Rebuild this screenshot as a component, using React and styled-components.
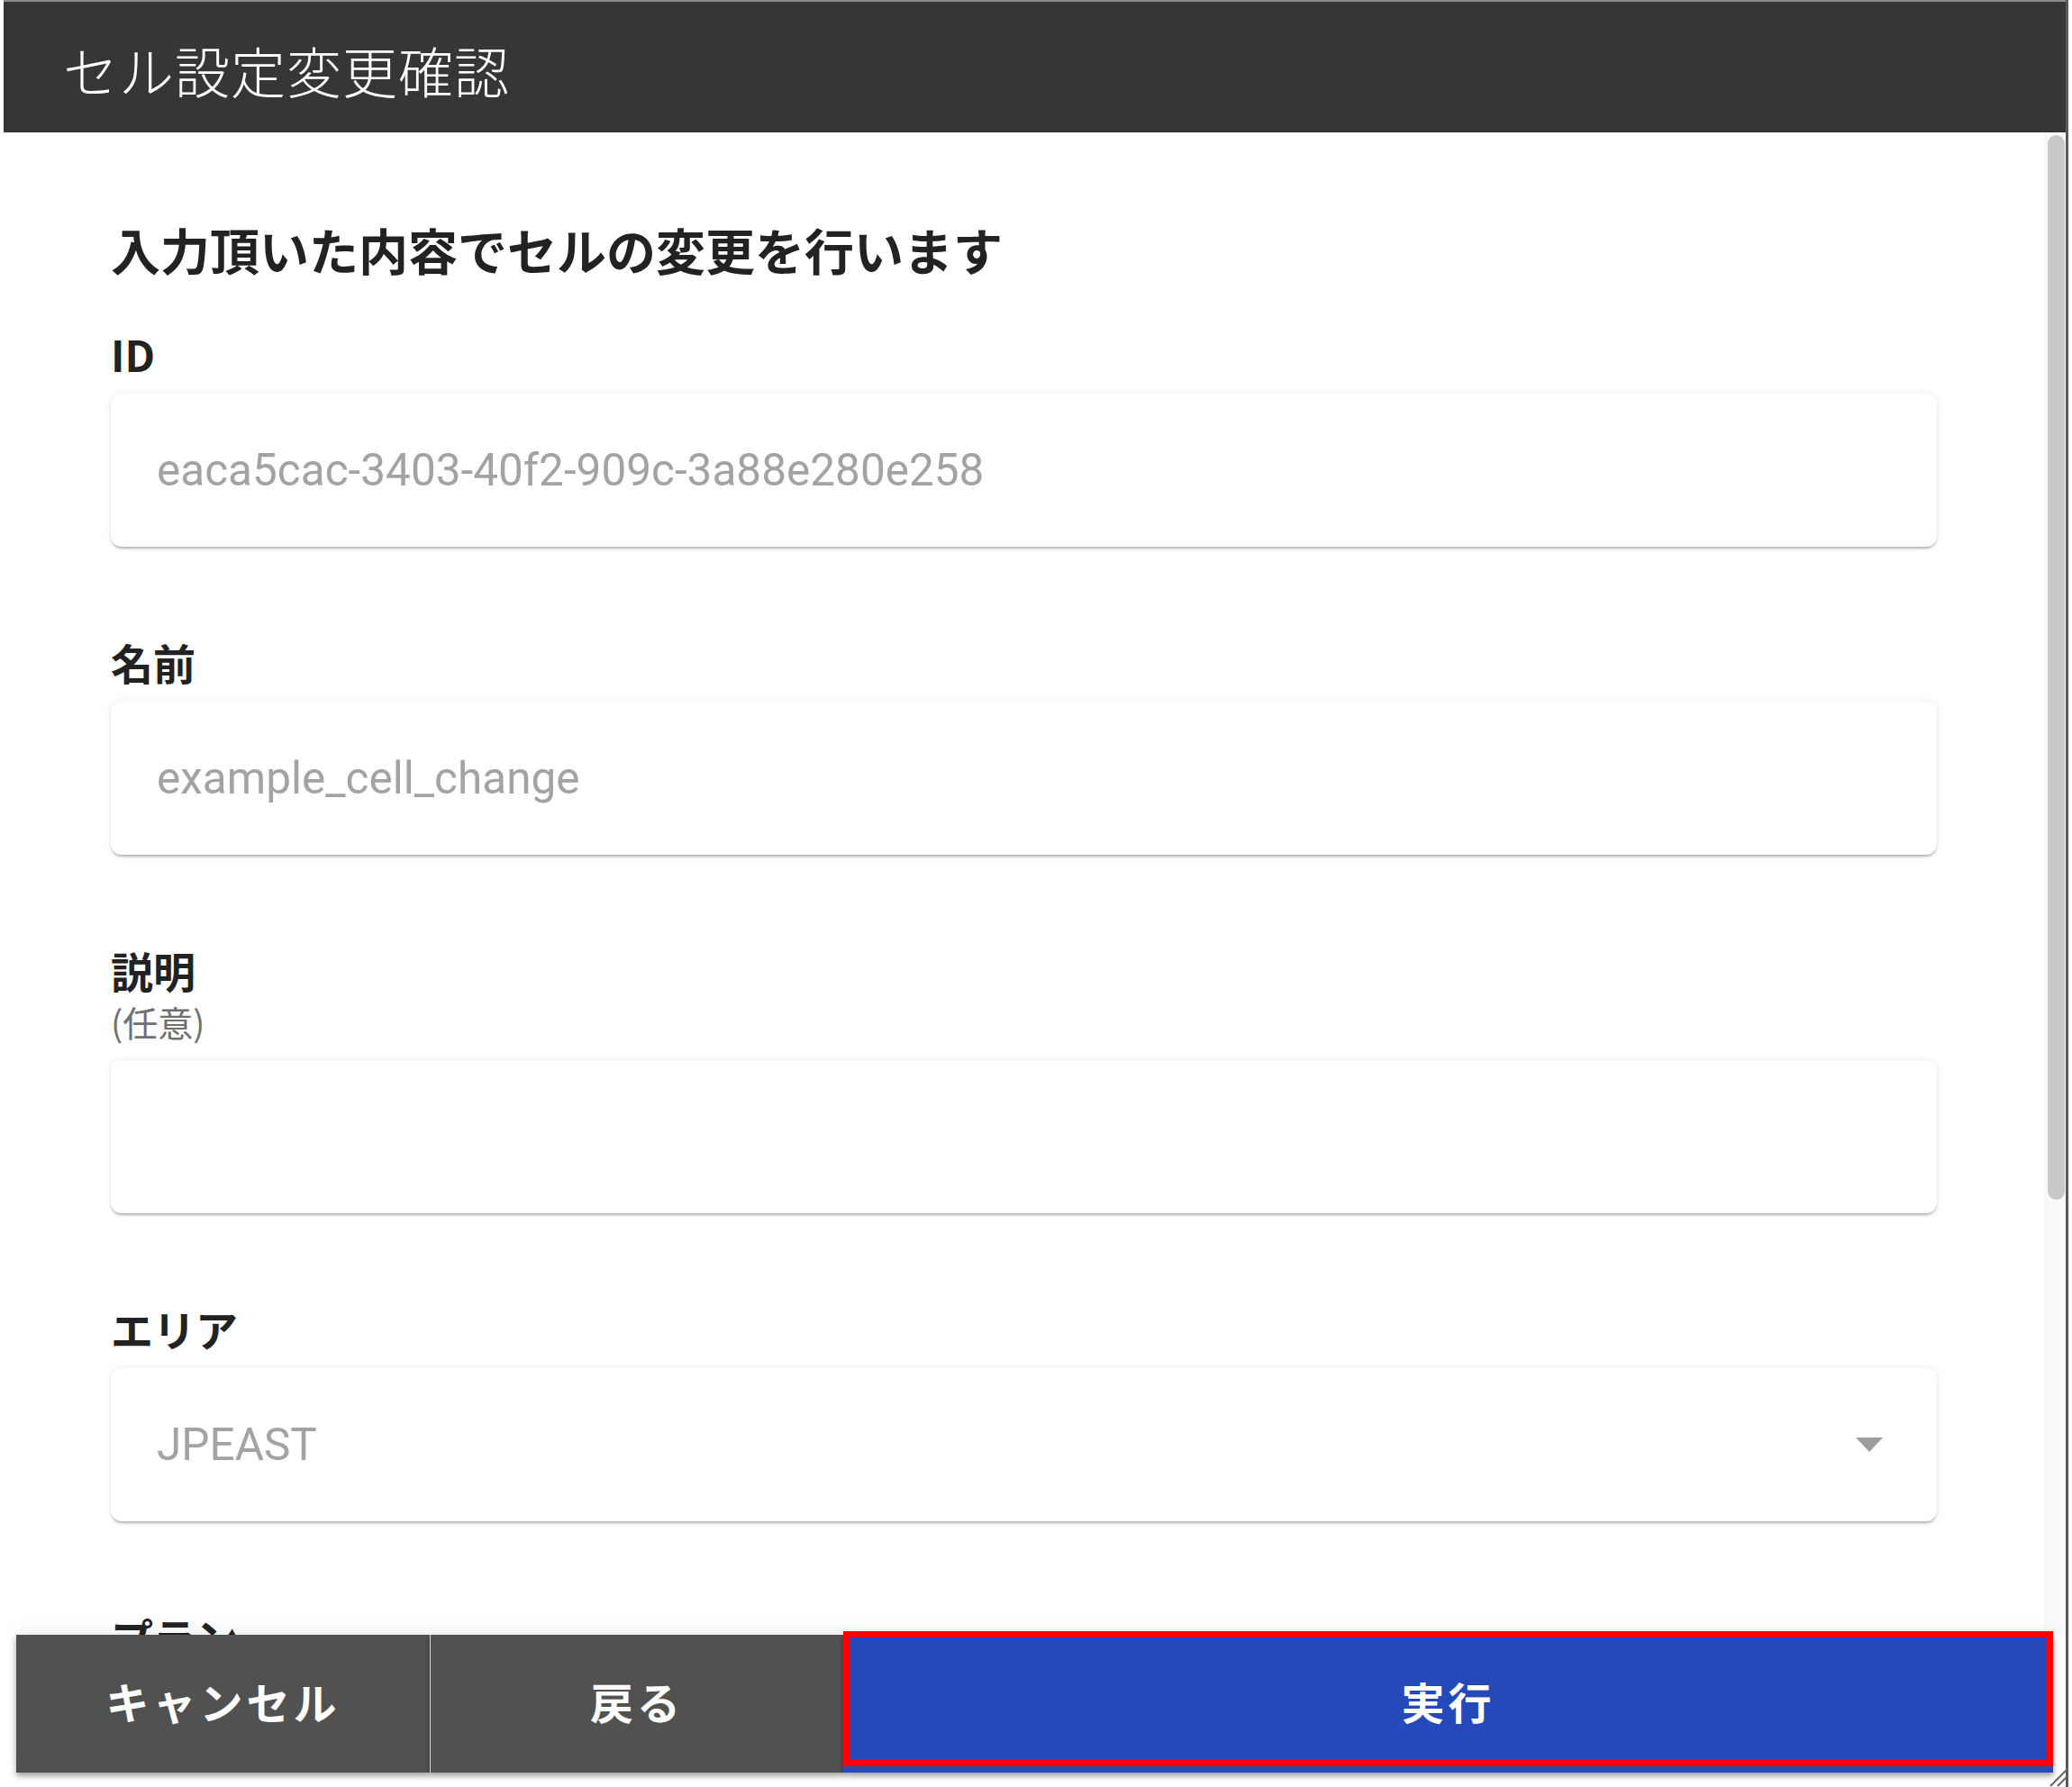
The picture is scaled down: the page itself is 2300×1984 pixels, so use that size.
import React from "react";
import styled, { createGlobalStyle } from "styled-components";

const Global = createGlobalStyle`
  html, body {
    margin: 0;
    padding: 0;
    width: 2300px;
    height: 1984px;
    overflow: hidden;
    background: #ffffff;
  }
  * { box-sizing: border-box; }
`;

const JP = `"Noto Sans CJK JP", "Noto Sans", sans-serif`;
const LATIN = `Roboto, "Noto Sans CJK JP", sans-serif`;

const Window = styled.div`
  position: relative;
  margin-left: 4px;
  width: 2292px;
  height: 1984px;
  display: flex;
  flex-direction: column;
  background: #ffffff;
  border-right: 3px solid #5a5a5a;
`;

const TitleBar = styled.header`
  flex: none;
  height: 147px;
  background: #363636;
  border-top: 2px solid #8c8c8c;
  display: flex;
  align-items: center;
  padding-left: 66px;
`;

const Title = styled.h1`
  margin: 0;
  font-family: ${JP};
  font-weight: 300;
  font-size: 61px;
  letter-spacing: 1px;
  color: #ffffff;
  line-height: 1;
  padding-top: 6px;
`;

const Body = styled.div`
  flex: 1;
  min-height: 0;
  display: flex;
`;

const Scroll = styled.main`
  flex: 1;
  min-width: 0;
  overflow: hidden;
  padding: 96px 120px 0 119px;
`;

const Track = styled.div`
  flex: none;
  width: 23px;
  background: #fafafa;
  border-left: 1px solid #ececec;
  padding: 3px 1px 0 2px;
`;

const Thumb = styled.div`
  height: 1182px;
  border-radius: 10px;
  background: #c9c9c9;
`;

const Lead = styled.h2`
  margin: 0 0 54px;
  font-family: ${JP};
  font-weight: 700;
  font-size: 55px;
  line-height: 66px;
  color: #222222;
`;

const Field = styled.section`
  & + & {
    margin-top: 98px;
  }
`;

const Label = styled.div`
  font-family: ${JP};
  font-weight: 700;
  font-size: 47px;
  line-height: 60px;
  color: #222222;
`;

const Note = styled.div`
  margin-top: 4px;
  font-family: ${JP};
  font-weight: 400;
  font-size: 39px;
  line-height: 46px;
  color: #707070;
`;

const Box = styled.div`
  margin-top: ${(p) => (p.$afterNote ? "20px" : "14px")};
  height: 170px;
  border-radius: 12px;
  background: #ffffff;
  box-shadow: 0 3px 3px -1px rgba(0, 0, 0, 0.28), 0 0 9px rgba(0, 0, 0, 0.08);
  display: flex;
  align-items: center;
  justify-content: space-between;
  padding: 0 60px 0 51px;
`;

const Value = styled.span`
  font-family: ${LATIN};
  font-weight: 400;
  font-size: 49.5px;
  color: #a3a3a3;
  white-space: nowrap;
`;

const Caret = styled.svg`
  width: 30px;
  height: 16px;
  flex: none;
`;

const Footer = styled.footer`
  flex: none;
  height: 153px;
  margin: 0 14px 16px 14px;
  display: flex;
  box-shadow: 0 -6px 18px rgba(0, 0, 0, 0.06);
`;

const Action = styled.button`
  position: relative;
  border: none;
  margin: 0;
  padding: 0 0 8px;
  height: 100%;
  flex: ${(p) => (p.$primary ? "1" : "none")};
  width: ${(p) => (p.$primary ? "auto" : "459px")};
  background: ${(p) => (p.$primary ? "#2649b9" : "#515151")};
  border-left: ${(p) => (p.$divider ? "1px solid #d8d8d8" : "none")};
  box-shadow: 0 4px 6px rgba(0, 0, 0, 0.35);
  font-family: ${JP};
  font-weight: 700;
  font-size: 48px;
  letter-spacing: 4px;
  color: #ffffff;
  cursor: pointer;
`;

const Highlight = styled.span`
  position: absolute;
  top: -4px;
  left: 0;
  right: 0;
  bottom: 7px;
  border: 7px solid #ff0000;
  pointer-events: none;
`;

const Grip = styled.svg`
  position: absolute;
  right: -3px;
  bottom: 0;
  width: 26px;
  height: 26px;
`;

export default function App() {
  return (
    <>
      <Global />
      <Window>
        <TitleBar>
          <Title>セル設定変更確認</Title>
        </TitleBar>
        <Body>
          <Scroll>
            <Lead>入力頂いた内容でセルの変更を行います</Lead>
            <Field>
              <Label>ID</Label>
              <Box>
                <Value>eaca5cac-3403-40f2-909c-3a88e280e258</Value>
              </Box>
            </Field>
            <Field>
              <Label>名前</Label>
              <Box>
                <Value>example_cell_change</Value>
              </Box>
            </Field>
            <Field>
              <Label>説明</Label>
              <Note>(任意)</Note>
              <Box $afterNote />
            </Field>
            <Field>
              <Label>エリア</Label>
              <Box>
                <Value>JPEAST</Value>
                <Caret viewBox="0 0 30 16">
                  <path d="M0 0 L30 0 L15 16 Z" fill="#9c9c9c" />
                </Caret>
              </Box>
            </Field>
            <Field>
              <Label>プラン</Label>
              <Box />
            </Field>
          </Scroll>
          <Track>
            <Thumb />
          </Track>
        </Body>
        <Footer>
          <Action>キャンセル</Action>
          <Action $divider>戻る</Action>
          <Action $primary>
            実行
            <Highlight />
          </Action>
        </Footer>
        <Grip viewBox="0 0 26 26">
          <path d="M6 25 L25 6 M14 25 L25 14" stroke="#666" strokeWidth="2" fill="none" />
        </Grip>
      </Window>
    </>
  );
}
